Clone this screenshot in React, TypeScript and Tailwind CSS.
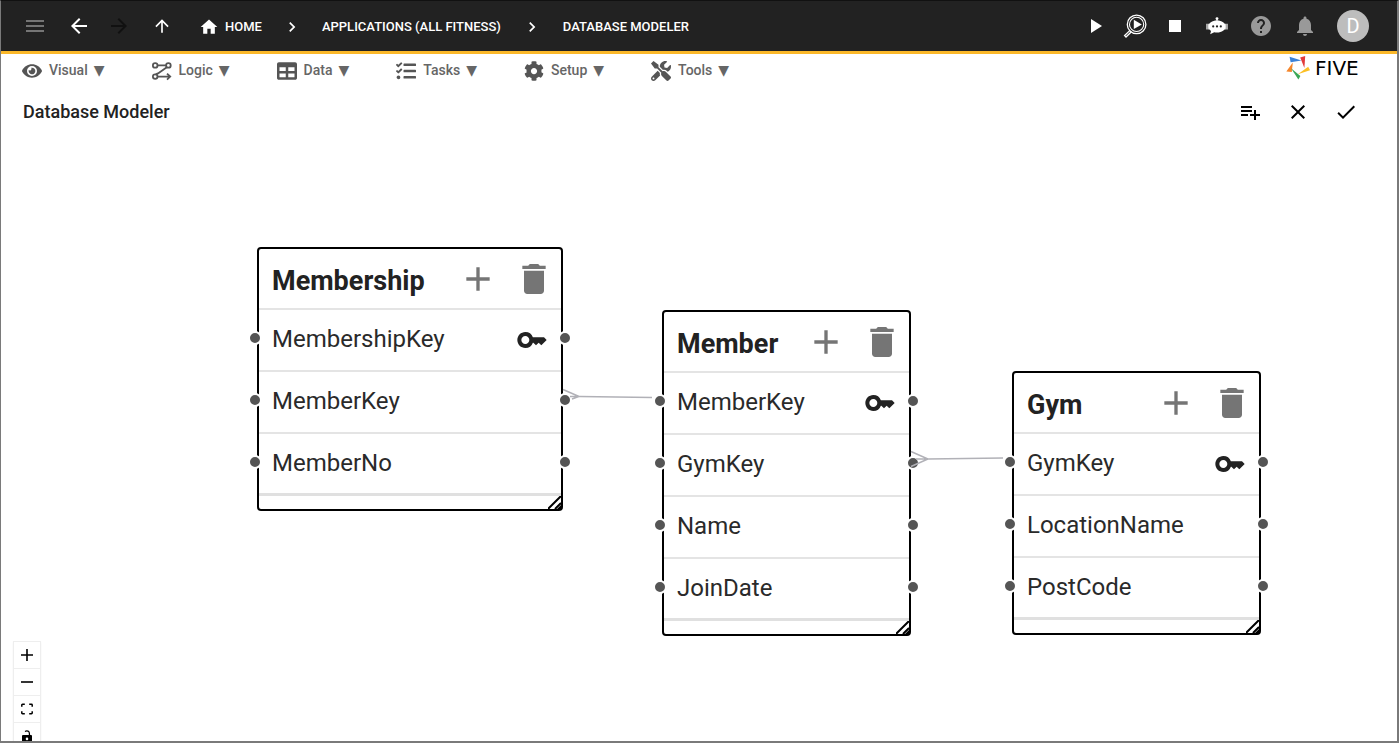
import React from "react";
import {
  MdAdd,
  MdArrowBack,
  MdArrowForward,
  MdArrowUpward,
  MdCheck,
  MdChevronRight,
  MdClose,
  MdDelete,
  MdHelp,
  MdHome,
  MdKey,
  MdMenu,
  MdNotifications,
  MdPlayArrow,
  MdPlaylistAdd,
  MdStop,
} from "react-icons/md";
import { FaCog, FaEye, FaTable, FaTasks, FaTools } from "react-icons/fa";

function LogicIcon() {
  return (
    <svg width="20" height="20" viewBox="0 0 20 20" fill="none" stroke="currentColor" strokeWidth="1.8">
      <circle cx="3.2" cy="4.4" r="2.3" />
      <circle cx="16.4" cy="4.4" r="2.3" />
      <circle cx="3.2" cy="15.6" r="2.3" />
      <path d="M5.5 4.4h8.600M14.800 6.200 6 12.400Q4.600 13.200 3.600 13.300M5.500 15.600h12.500M15 12.600l3.200 3-3.200 3" />
    </svg>
  );
}

function InspectIcon() {
  return (
    <svg width="24" height="24" viewBox="0 0 24 24" fill="none" stroke="#fff">
      <circle cx="13.6" cy="10.4" r="9.3" strokeWidth="1.3" />
      <circle cx="13.6" cy="10.4" r="7.1" strokeWidth="1.1" />
      <path d="M7 16.4 1.6 21.6 3 23l5.4-5.2" strokeWidth="1.3" />
      <path d="M10.8 5.8v9.2l8-4.6z" fill="#fff" stroke="none" />
    </svg>
  );
}

function ChatBotIcon() {
  return (
    <svg width="24" height="24" viewBox="0 0 24 24" fill="#fff">
      <circle cx="12" cy="4.6" r="1.400" />
      <path d="M11.4 5h1.2v3h-1.2z" />
      <path d="M12 6.6c5 0 8.400 2.400 8.400 6S17 18.600 12 18.600c-1 0-2-.1-2.800-.4L5.200 20.200l.8-3.200C4.500 15.800 3.600 14.300 3.600 12.600c0-3.600 3.400-6 8.400-6z" />
      <path d="M1.400 9.800h1.200v5.600H1.400zM21.400 9.800h1.200v5.600h-1.200z" />
      <path d="M3.200 9.800h1.600v5.600H3.200zM19.200 9.800h1.600v5.600h-1.600z" />
      <g fill="#222">
        <circle cx="8.200" cy="12.400" r="1.100" />
        <circle cx="12" cy="12.400" r="1.100" />
        <circle cx="15.800" cy="12.400" r="1.100" />
      </g>
    </svg>
  );
}

function FiveMark() {
  return (
    <svg width="24" height="24" viewBox="0 0 24 24">
      <path d="M3.600.8 15.500 4.400 4.600 6.200z" fill="#3b82d8" />
      <path d="M19.200 0 18.400 12 14.200 1.400z" fill="#e23b3b" />
      <path d="M6.800 6.600 5.800 15.900.3 15.600z" fill="#f5862b" />
      <path d="M22.200 10.800 24 14.200 11.800 18.200z" fill="#fbbf24" />
      <path d="M5 12.200 14.400 20 12.400 23.600z" fill="#3aa757" />
    </svg>
  );
}

const menus = [
  { label: "Visual", icon: <FaEye size={20} /> },
  { label: "Logic", icon: <LogicIcon /> },
  { label: "Data", icon: <FaTable size={20} /> },
  { label: "Tasks", icon: <FaTasks size={20} /> },
  { label: "Setup", icon: <FaCog size={20} /> },
  { label: "Tools", icon: <FaTools size={20} /> },
];

type Entity = { name: string; place: string; fields: { name: string; key?: boolean }[] };

const entities: Entity[] = [
  {
    name: "Membership",
    place: "left-[256px] top-[111px] w-[306px]",
    fields: [{ name: "MembershipKey", key: true }, { name: "MemberKey" }, { name: "MemberNo" }],
  },
  {
    name: "Member",
    place: "left-[661px] top-[174px] w-[249px]",
    fields: [{ name: "MemberKey", key: true }, { name: "GymKey" }, { name: "Name" }, { name: "JoinDate" }],
  },
  {
    name: "Gym",
    place: "left-[1011px] top-[235px] w-[249px]",
    fields: [{ name: "GymKey", key: true }, { name: "LocationName" }, { name: "PostCode" }],
  },
];

function EntityNode({ entity }: { entity: Entity }) {
  return (
    <section className={`absolute rounded-sm border-2 border-black bg-white ${entity.place}`}>
      <header className="flex h-[61px] items-center border-b-2 border-[#e4e4e4] pr-[7px] pl-[13px]">
        <h2 className="grow pt-1 text-[27px] leading-8 font-bold">{entity.name}</h2>
        <div className="flex gap-4 text-[#757575]">
          <button aria-label={`Add field to ${entity.name}`}>
            <MdAdd size={40} />
          </button>
          <button aria-label={`Delete ${entity.name}`}>
            <MdDelete size={40} />
          </button>
        </div>
      </header>
      <ul>
        {entity.fields.map((field) => (
          <li
            key={field.name}
            className="relative flex h-[62px] items-center border-b-2 border-[#e4e4e4] pr-[13px] pl-[13px] last:border-b-[3px] last:border-[#e0e0e0]"
          >
            <span className="absolute top-[21px] -left-[11px] size-[14px] rounded-full border-2 border-white bg-[#555]" />
            <span className="grow pb-[2px] text-2xl leading-8 text-[#2a2a2a]">{field.name}</span>
            {field.key && <MdKey size={32} />}
            <span className="absolute top-[21px] -right-[11px] size-[14px] rounded-full border-2 border-white bg-[#555]" />
          </li>
        ))}
      </ul>
      <div className="flex h-[13px] justify-end">
        <svg width="13" height="13" viewBox="0 0 13 13" stroke="#000" strokeWidth="2">
          <path d="M0 13 13 0M7 13l6-6" />
          <path d="M9 13h4V9z" stroke="none" />
        </svg>
      </div>
    </section>
  );
}

const iconButton = "flex size-6 items-center justify-center";

export default function App() {
  return (
    <div className="flex h-screen flex-col overflow-hidden border-t border-r-2 border-b-2 border-l border-t-[#111] border-r-[#7a7a7a] border-b-[#7a7a7a] border-l-[#7a7a7a] bg-white font-['Roboto',sans-serif] text-[#222]">
      <header className="flex h-[53px] shrink-0 items-center border-b-[3px] border-[#fbb829] bg-[#222] pr-7 pl-[22px] text-white">
        <nav className="flex grow items-center">
          <div className="flex items-center gap-4">
            <button className={`${iconButton} mr-1 text-[#757575]`} aria-label="Menu">
              <MdMenu size={24} />
            </button>
            <button className={iconButton} aria-label="Back">
              <MdArrowBack size={24} />
            </button>
            <button className={`${iconButton} text-[#111]`} aria-label="Forward">
              <MdArrowForward size={24} />
            </button>
            <button className={`${iconButton} ml-[3px]`} aria-label="Up">
              <MdArrowUpward size={20} />
            </button>
          </div>
          <div className="ml-[25px] flex items-center pt-px text-[13px] font-medium">
            <a href="#home" className="flex items-center gap-[6px]">
              <MdHome size={20} />
              HOME
            </a>
            <MdChevronRight size={20} className="mx-5" />
            <a href="#applications">APPLICATIONS (ALL FITNESS)</a>
            <MdChevronRight size={20} className="mx-[21px]" />
            <a href="#modeler">DATABASE MODELER</a>
          </div>
        </nav>
        <div className="flex items-center gap-4">
          <button className={iconButton} aria-label="Run">
            <MdPlayArrow size={24} />
          </button>
          <button className={iconButton} aria-label="Inspect">
            <InspectIcon />
          </button>
          <button className={iconButton} aria-label="Stop">
            <MdStop size={24} />
          </button>
          <button className={`${iconButton} ml-[2px]`} aria-label="Assistant">
            <ChatBotIcon />
          </button>
          <button className={`${iconButton} ml-1 text-[#999]`} aria-label="Help">
            <MdHelp size={24} />
          </button>
          <button className={`${iconButton} ml-1 text-[#999]`} aria-label="Notifications">
            <MdNotifications size={24} />
          </button>
          <button className="ml-1 flex size-8 items-center justify-center rounded-full bg-[#bdbdbd] text-xl" aria-label="Account D">
            D
          </button>
        </div>
      </header>

      <div className="flex h-[34px] shrink-0 items-center pr-6 pl-[21px]">
        <div className="flex grow items-center gap-[47px] text-sm font-medium text-[#666]">
          {menus.map((menu) => (
            <button key={menu.label} className="flex items-center">
              <span className="mr-[7px] text-[#555]">{menu.icon}</span>
              <span className="pb-[2px]">
                {menu.label}
                <span className="ml-[6px] font-['DejaVu_Sans',sans-serif]">▼</span>
              </span>
            </button>
          ))}
        </div>
        <div className="flex items-center gap-[5px] pb-[6px] font-['DejaVu_Sans',sans-serif] text-xl leading-6 text-black">
          <FiveMark />
          <span className="w-[58px]">FIVE</span>
        </div>
      </div>

      <div className="flex h-12 shrink-0 items-center justify-between pr-[27px] pl-[22px]">
        <h1 className="text-lg font-medium">Database Modeler</h1>
        <div className="flex text-black">
          <button className="flex size-12 items-center justify-center" aria-label="Add table">
            <MdPlaylistAdd size={24} />
          </button>
          <button className="flex size-12 items-center justify-center" aria-label="Cancel">
            <MdClose size={24} />
          </button>
          <button className="flex size-12 items-center justify-center" aria-label="Save">
            <MdCheck size={24} />
          </button>
        </div>
      </div>

      <main className="relative grow overflow-hidden">
        {entities.map((entity) => (
          <EntityNode key={entity.name} entity={entity} />
        ))}
        <svg className="pointer-events-none absolute top-0 left-0 h-full w-full" fill="none" stroke="#b1b1b7" strokeWidth="1.5">
          <path d="M562 253.500 578 260.500 571 263M569 260.500h10L651 261.500" />
          <path d="M910 315.500 927 323 910 330.500M915 323h12L1002 322" />
        </svg>
        <div className="absolute -bottom-[10px] left-3 flex w-7 flex-col border border-[#eee] bg-white text-black shadow-xs">
          <button className="flex h-[27px] items-center justify-center border-b border-[#eee]" aria-label="Zoom in">
            <svg width="12" height="12" viewBox="0 0 12 12" stroke="currentColor" strokeWidth="1.600">
              <path d="M6 0v12M0 6h12" />
            </svg>
          </button>
          <button className="flex h-[27px] items-center justify-center border-b border-[#eee]" aria-label="Zoom out">
            <svg width="12" height="12" viewBox="0 0 12 12" stroke="currentColor" strokeWidth="1.600">
              <path d="M0 6h12" />
            </svg>
          </button>
          <button className="flex h-[27px] items-center justify-center border-b border-[#eee]" aria-label="Fit view">
            <svg width="12" height="12" viewBox="0 0 12 12" fill="none" stroke="currentColor" strokeWidth="1.500">
              <path d="M.8 3.800V2Q.8 1.300 1.500 1.300H3.800M8.200 1.300h2.300q.7 0 .7.7v1.800M11.200 8.200V10q0 .7-.7.7H8.200M3.800 10.700H1.500Q.8 10.700.8 10V8.200" />
            </svg>
          </button>
          <button className="flex h-[27px] items-center justify-center" aria-label="Toggle interactivity">
            <svg width="10" height="13" viewBox="0 0 10 13" fill="none">
              <path d="M3 1.500Q5 .2 6.800 1.600 7.500 2.300 7.500 5" stroke="currentColor" strokeWidth="1.300" />
              <path d="M1 5h8q1 0 1 1v6q0 1-1 1H1q-1 0-1-1V6q0-1 1-1zm4 2.600a1.300 1.300 0 1 0 0 2.600 1.300 1.300 0 0 0 0-2.600z" fill="currentColor" fillRule="evenodd" />
            </svg>
          </button>
        </div>
      </main>
    </div>
  );
}
